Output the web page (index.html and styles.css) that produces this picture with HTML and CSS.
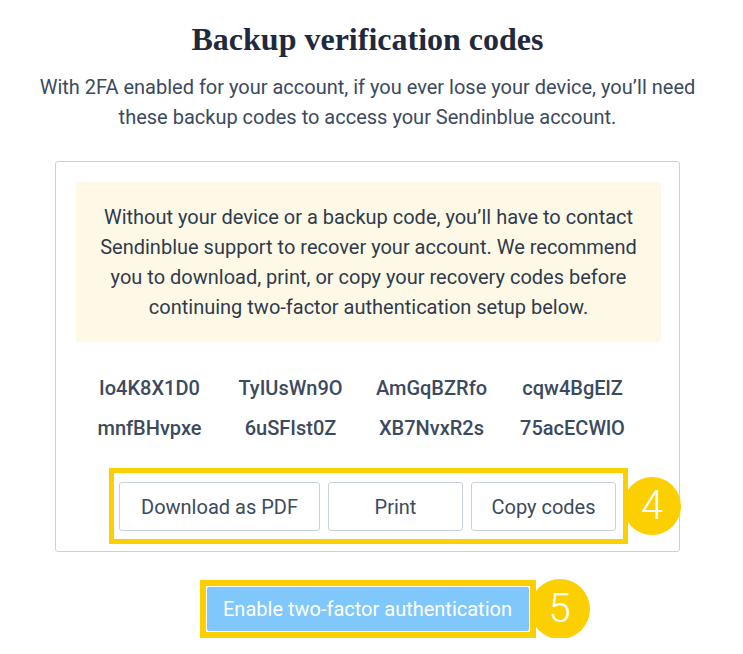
FILE: index.html
```html
<!DOCTYPE html>
<html lang="en">
<head>
    <meta charset="UTF-8">
    <meta name="viewport" content="width=device-width, initial-scale=1.0">
    <title>Backup verification codes</title>
    <link rel="stylesheet" href="styles.css">
</head>
<body>
    <div class="container">
        <h1>Backup verification codes</h1>
        <p class="intro">With 2FA enabled for your account, if you ever lose your device, you’ll need these backup codes to access your Sendinblue account.</p>

        <div class="card">
            <div class="notice">
                Without your device or a backup code, you’ll have to contact Sendinblue support to recover your account. We recommend you to download, print, or copy your recovery codes before continuing two-factor authentication setup below.
            </div>

            <div class="codes">
                <span>Io4K8X1D0</span>
                <span>TyIUsWn9O</span>
                <span>AmGqBZRfo</span>
                <span>cqw4BgElZ</span>
                <span>mnfBHvpxe</span>
                <span>6uSFIst0Z</span>
                <span>XB7NvxR2s</span>
                <span>75acECWlO</span>
            </div>

            <div class="actions">
                <div class="highlight">
                    <button class="btn btn-pdf">Download as PDF</button>
                    <button class="btn btn-print">Print</button>
                    <button class="btn btn-copy">Copy codes</button>
                    <span class="step step-4">4</span>
                </div>
            </div>
        </div>

        <div class="enable-row">
            <div class="highlight highlight-enable">
                <button class="btn-enable">Enable two-factor authentication</button>
                <span class="step step-5">5</span>
            </div>
        </div>
    </div>
</body>
</html>
```

FILE: styles.css
```css
/* Page */
body {
    background-color: #fff;
    color: #3b4a5e;
    font-family: Roboto, 'Liberation Sans', sans-serif;
    margin: 0;
    padding: 19px 8px 0 0;
}

.container {
    width: 625px;
    margin: 0 auto;
    text-align: center;
}

h1 {
    margin: 0;
    font-family: 'Liberation Serif', 'DejaVu Serif', serif;
    font-size: 32px;
    font-weight: bold;
    line-height: 40px;
    color: #1f2a3d;
}

.intro {
    margin: 13px -30px 0;
    font-size: 20px;
    line-height: 30px;
}

/* Card with codes */
.card {
    margin-top: 29px;
    border: 1px solid #c9d2dc;
    border-radius: 3px;
    padding: 20px 18px 7px 20px;
}

.notice {
    background-color: #fef9e7;
    border-radius: 3px;
    padding: 20px 24px;
    font-size: 20px;
    line-height: 30px;
    color: #2f3b4c;
}

.codes {
    display: grid;
    grid-template-columns: repeat(4, 141px);
    row-gap: 10px;
    margin: 31px 0 0 3px;
    font-size: 20px;
    font-weight: 500;
    line-height: 30px;
    color: #3b4a5e;
}

.actions {
    margin-top: 25px;
    display: flex;
    justify-content: center;
}

/* Annotation boxes */
.highlight {
    position: relative;
    display: inline-flex;
    gap: 8px;
    border: 5px solid #fcd000;
    padding: 9px 7px 8px 5px;
}

.btn {
    height: 49px;
    background-color: #fff;
    border: 1px solid #c9d2dc;
    border-radius: 3px;
    font-family: Roboto, 'Liberation Sans', sans-serif;
    font-size: 20px;
    color: #3b4a5e;
    cursor: pointer;
}

.btn-pdf {
    width: 201px;
}

.btn-print {
    width: 135px;
}

.btn-copy {
    width: 145px;
}

.step {
    position: absolute;
    top: 50%;
    left: 100%;
    width: 58px;
    height: 58px;
    margin-top: -29px;
    border-radius: 50%;
    background-color: #fcd000;
    color: #fff;
    font-size: 40px;
    font-weight: 300;
    line-height: 58px;
    text-align: center;
}

/* Enable button */
.enable-row {
    margin-top: 28px;
    display: flex;
    justify-content: center;
}

.highlight-enable {
    border-width: 6px;
    padding: 1px;
}

.btn-enable {
    width: 322px;
    height: 44px;
    border: none;
    border-radius: 2px;
    background-color: #80c8fc;
    color: #fff;
    font-family: Roboto, 'Liberation Sans', sans-serif;
    font-size: 20px;
    cursor: pointer;
}

.step-5 {
    width: 60px;
    height: 60px;
    margin-top: -30px;
    line-height: 60px;
}
```
